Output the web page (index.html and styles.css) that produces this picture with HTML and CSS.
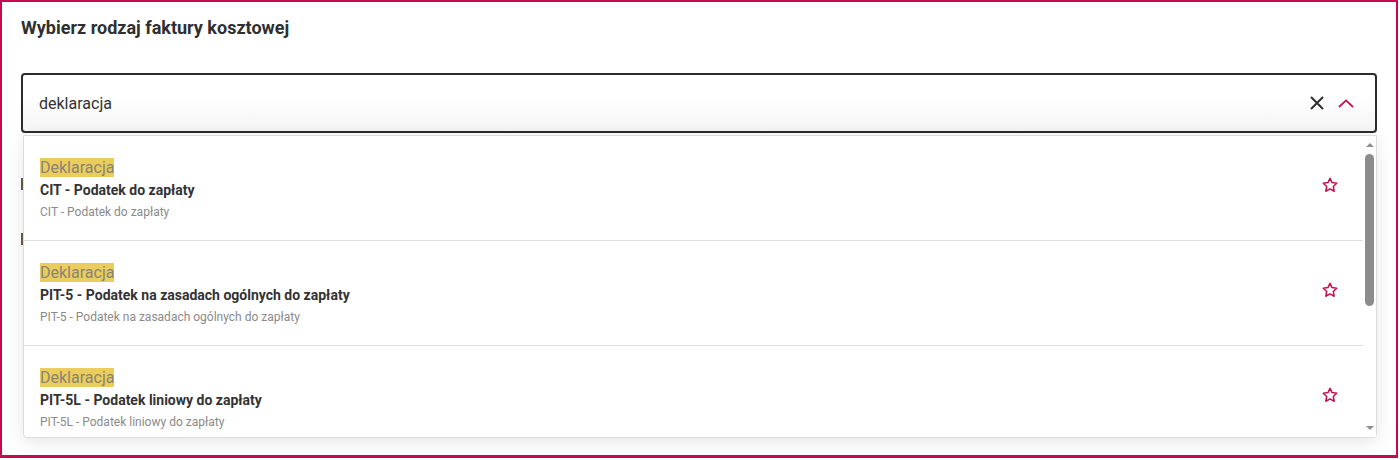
FILE: index.html
```html
<!DOCTYPE html>
<html lang="pl">
<head>
<meta charset="utf-8">
<title>Wybierz rodzaj faktury kosztowej</title>
<link rel="stylesheet" href="styles.css">
</head>
<body>
<div class="frame">
  <h1 class="title">Wybierz rodzaj faktury kosztowej</h1>
  <div class="combo">
    <div class="input">
      <span class="value">deklaracja</span>
      <div class="actions">
        <svg class="ic-clear" width="14" height="14" viewBox="0 0 14 14"><path d="M1 1L13 13M13 1L1 13" stroke="#2f2f2f" stroke-width="2" fill="none"/></svg>
        <svg class="ic-chev" width="16" height="9" viewBox="0 0 16 9"><path d="M1 8L8 1.4L15 8" stroke="#c8104f" stroke-width="1.8" fill="none"/></svg>
      </div>
    </div>
    <div class="dropdown">
      <div class="list">
        <div class="item">
          <div class="text">
            <div class="group"><span class="hl">Deklaracja</span></div>
            <div class="name">CIT - Podatek do zapłaty</div>
            <div class="desc">CIT - Podatek do zapłaty</div>
          </div>
          <svg class="star" width="18" height="18" viewBox="0 0 24 24"><path d="M12 3l2.7 5.8 6.3.8-4.6 4.4 1.2 6.3L12 17.2 6.4 20.3l1.2-6.3L3 9.6l6.3-.8z" stroke="#c8104f" stroke-width="2" fill="none" stroke-linejoin="round"/></svg>
        </div>
        <div class="item">
          <div class="text">
            <div class="group"><span class="hl">Deklaracja</span></div>
            <div class="name">PIT-5 - Podatek na zasadach ogólnych do zapłaty</div>
            <div class="desc">PIT-5 - Podatek na zasadach ogólnych do zapłaty</div>
          </div>
          <svg class="star" width="18" height="18" viewBox="0 0 24 24"><path d="M12 3l2.7 5.8 6.3.8-4.6 4.4 1.2 6.3L12 17.2 6.4 20.3l1.2-6.3L3 9.6l6.3-.8z" stroke="#c8104f" stroke-width="2" fill="none" stroke-linejoin="round"/></svg>
        </div>
        <div class="item">
          <div class="text">
            <div class="group"><span class="hl">Deklaracja</span></div>
            <div class="name">PIT-5L - Podatek liniowy do zapłaty</div>
            <div class="desc">PIT-5L - Podatek liniowy do zapłaty</div>
          </div>
          <svg class="star" width="18" height="18" viewBox="0 0 24 24"><path d="M12 3l2.7 5.8 6.3.8-4.6 4.4 1.2 6.3L12 17.2 6.4 20.3l1.2-6.3L3 9.6l6.3-.8z" stroke="#c8104f" stroke-width="2" fill="none" stroke-linejoin="round"/></svg>
        </div>
      </div>
      <div class="scrollbar">
        <span class="arrow up"></span>
        <span class="thumb"></span>
        <span class="track"></span>
        <span class="arrow down"></span>
      </div>
    </div>
  </div>
  <div class="behind">
    <span class="mark"></span>
    <span class="mark"></span>
  </div>
</div>
</body>
</html>
```

FILE: styles.css
```css
html, body {
  margin: 0;
  padding: 0;
  background: #ffffff;
}

body {
  font-family: Roboto, "Liberation Sans", Arial, sans-serif;
  color: #333333;
}

.frame {
  box-sizing: border-box;
  width: 1398px;
  height: 458px;
  border: 2px solid #c8084f;
  border-bottom-width: 3px;
  padding: 15px 19px 0 19px;
  background: #ffffff;
  overflow: hidden;
}

.title {
  margin: 0;
  font-size: 18px;
  line-height: 21px;
  font-weight: 700;
  color: #2f2f2f;
}

.combo {
  position: relative;
  margin-top: 35px;
}

.input {
  box-sizing: border-box;
  height: 60px;
  border: 2px solid #2b2b2b;
  border-radius: 4px;
  background: linear-gradient(#ffffff 40%, #f4f4f4);
  display: flex;
  align-items: center;
  padding: 0 21px 0 16px;
}

.value {
  flex: 1;
  font-size: 16px;
  color: #333333;
}

.actions {
  display: flex;
  align-items: center;
  gap: 14px;
}

.ic-clear, .ic-chev {
  display: block;
}

.dropdown {
  position: absolute;
  top: calc(100% + 2px);
  left: 2px;
  right: 0;
  height: 303px;
  box-sizing: border-box;
  border: 1px solid #dcdcdc;
  border-radius: 0 0 4px 4px;
  background: #ffffff;
  box-shadow: 0 4px 18px rgba(0, 0, 0, 0.10);
  display: flex;
  z-index: 5;
}

.list {
  flex: 1;
  overflow: hidden;
}

.item {
  box-sizing: border-box;
  height: 105px;
  border-bottom: 1px solid #dedede;
  display: flex;
  align-items: flex-start;
  padding: 22px 24px 0 16px;
}

.text {
  flex: 1;
}

.group {
  font-size: 16px;
  line-height: 19px;
}

.hl {
  background: #ebcd5d;
  color: #8a8472;
}

.name {
  margin-top: 5px;
  font-size: 14px;
  line-height: 17px;
  font-weight: 700;
  color: #333333;
}

.desc {
  margin-top: 6px;
  font-size: 12px;
  line-height: 15px;
  color: #8a8a8a;
}

.star {
  display: block;
  margin-top: 18px;
}

.scrollbar {
  width: 13px;
  display: flex;
  flex-direction: column;
  align-items: center;
  padding: 7px 0 7px 0;
  box-sizing: border-box;
  background: #ffffff;
}

.arrow {
  width: 0;
  height: 0;
  border-left: 4.5px solid transparent;
  border-right: 4.5px solid transparent;
}

.arrow.up {
  border-bottom: 4.5px solid #8f8f8f;
}

.arrow.down {
  border-top: 4.5px solid #8f8f8f;
}

.thumb {
  margin-top: 7px;
  width: 9px;
  height: 152px;
  border-radius: 4.5px;
  background: #8c8c8c;
}

.track {
  flex: 1;
}

.behind {
  display: flex;
  flex-direction: column;
  gap: 43px;
  padding-top: 45px;
}

.mark {
  display: block;
  width: 3px;
  height: 12px;
  background: #6b5a48;
}
```
